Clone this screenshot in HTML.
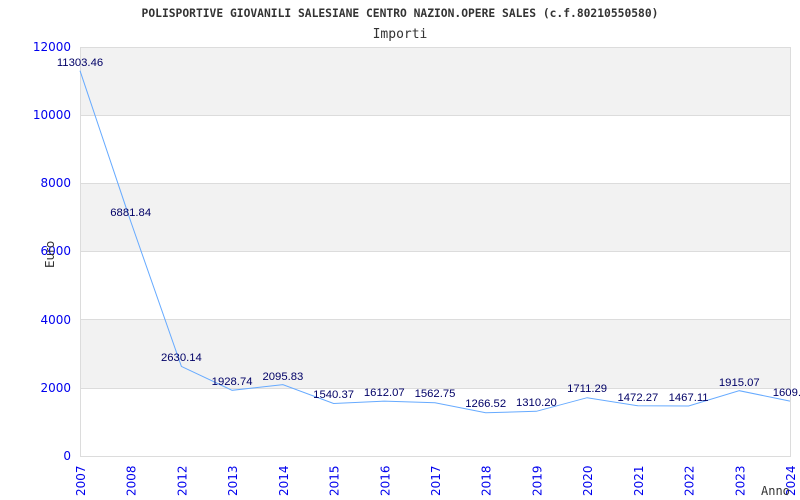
<!DOCTYPE html>
<html><head><meta charset="utf-8"><style>body{margin:0;background:#fff}svg{display:block}</style></head><body>
<svg width="800" height="500" xmlns="http://www.w3.org/2000/svg">
<rect width="800" height="500" fill="#fff"/>
<text x="400" y="17" text-anchor="middle" font-family="DejaVu Sans Mono, Liberation Mono, monospace" font-weight="bold" font-size="11.3" fill="#333">POLISPORTIVE GIOVANILI SALESIANE CENTRO NAZION.OPERE SALES (c.f.80210550580)</text>
<text x="400" y="38" text-anchor="middle" font-family="DejaVu Sans Mono, Liberation Mono, monospace" font-size="13" fill="#333">Importi</text>
<rect x="80" y="47" width="710" height="68.2" fill="#f2f2f2"/>
<rect x="80" y="183.3" width="710" height="68.2" fill="#f2f2f2"/>
<rect x="80" y="319.7" width="710" height="68.2" fill="#f2f2f2"/>
<g stroke="#dcdcdc" stroke-width="1">
<line x1="80" y1="47.5" x2="790" y2="47.5"/><line x1="80" y1="115.5" x2="790" y2="115.5"/><line x1="80" y1="183.5" x2="790" y2="183.5"/><line x1="80" y1="251.5" x2="790" y2="251.5"/><line x1="80" y1="319.5" x2="790" y2="319.5"/><line x1="80" y1="388.5" x2="790" y2="388.5"/><line x1="80" y1="456.5" x2="790" y2="456.5"/>
<line x1="80.5" y1="47" x2="80.5" y2="457"/><line x1="790.5" y1="47" x2="790.5" y2="457"/>
</g>
<g font-family="DejaVu Sans, Liberation Sans, sans-serif" font-size="12" fill="#0000ee" text-anchor="end">
<text x="71" y="51">12000</text><text x="71" y="119">10000</text><text x="71" y="187">8000</text><text x="71" y="255">6000</text><text x="71" y="324">4000</text><text x="71" y="392">2000</text><text x="71" y="460">0</text>
</g>
<text transform="translate(54,268) rotate(-90)" font-family="DejaVu Sans, Liberation Sans, sans-serif" font-size="12" fill="#333">Euro</text>
<polyline fill="none" stroke="#66aaff" stroke-width="1" points="80,70.7 130.7,221.4 181.4,366.4 232.1,390.3 282.9,384.6 333.6,403.5 384.3,401.1 435,402.7 485.7,412.8 536.4,411.3 587.1,397.7 637.9,405.8 688.6,406 739.3,390.7 790,401.1"/>
<g font-family="Liberation Sans, sans-serif" font-size="11.3" fill="#000066" text-anchor="middle">
<text x="80" y="66">11303.46</text><text x="130.7" y="216">6881.84</text><text x="181.4" y="361">2630.14</text><text x="232.1" y="385">1928.74</text><text x="282.9" y="380">2095.83</text><text x="333.6" y="398">1540.37</text><text x="384.3" y="396">1612.07</text><text x="435" y="397">1562.75</text><text x="485.7" y="407">1266.52</text><text x="536.4" y="406">1310.20</text><text x="587.1" y="392">1711.29</text><text x="637.9" y="401">1472.27</text><text x="688.6" y="401">1467.11</text><text x="739.3" y="386">1915.07</text><text x="790" y="396">1609.8</text>
</g>
<g font-family="DejaVu Sans, Liberation Sans, sans-serif" font-size="12" fill="#0000ee">
<text transform="translate(85,496) rotate(-90)">2007</text>
<text transform="translate(135.7,496) rotate(-90)">2008</text>
<text transform="translate(186.4,496) rotate(-90)">2012</text>
<text transform="translate(237.1,496) rotate(-90)">2013</text>
<text transform="translate(287.9,496) rotate(-90)">2014</text>
<text transform="translate(338.6,496) rotate(-90)">2015</text>
<text transform="translate(389.3,496) rotate(-90)">2016</text>
<text transform="translate(440,496) rotate(-90)">2017</text>
<text transform="translate(490.7,496) rotate(-90)">2018</text>
<text transform="translate(541.4,496) rotate(-90)">2019</text>
<text transform="translate(592.1,496) rotate(-90)">2020</text>
<text transform="translate(642.9,496) rotate(-90)">2021</text>
<text transform="translate(693.6,496) rotate(-90)">2022</text>
<text transform="translate(744.3,496) rotate(-90)">2023</text>
<text transform="translate(795,496) rotate(-90)">2024</text>
</g>
<text x="761" y="495" font-family="DejaVu Sans Mono, Liberation Mono, monospace" font-size="12" fill="#333">Anno</text>
</svg>
</body></html>
